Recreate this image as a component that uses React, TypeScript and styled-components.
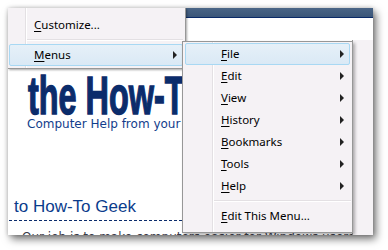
import styled, { createGlobalStyle } from 'styled-components';

const GlobalStyle = createGlobalStyle`
  html, body {
    margin: 0;
    padding: 0;
    background: #ffffff;
  }
  body {
    width: 388px;
    height: 250px;
    overflow: hidden;
    font-family: "Noto Sans", "DejaVu Sans", sans-serif;
  }
`;

const topItems = [
  { key: 'F', rest: 'ile', active: true },
  { key: 'E', rest: 'dit' },
  { key: 'V', rest: 'iew' },
  { key: 'H', rest: 'istory' },
  { key: 'B', rest: 'ookmarks' },
  { key: 'T', rest: 'ools' },
  { key: 'H', rest: 'elp' }
];

const App = () => {
  return (
    <>
      <GlobalStyle />
      <S.Window>
        <S.Page>
          <S.TitleBar />
          <S.ToolbarBand />
          <S.Body>
            <S.Main>
              <S.Logo>
                <S.LogoText>the How-To Geek</S.LogoText>
              </S.Logo>
              <S.Tagline>Computer Help from your Friendly How-To Geek</S.Tagline>
              <S.Welcome>to How-To Geek</S.Welcome>
              <S.Intro>Our job is to make computers easier for Windows users</S.Intro>
            </S.Main>
            <S.SideStrip />
          </S.Body>
        </S.Page>

        {/* context menu */}
        <S.ContextMenu>
          <S.Item>
            <S.Label>
              <u>C</u>ustomize...
            </S.Label>
          </S.Item>
          <S.Separator />
          <S.Item active>
            <S.Label>
              <u>M</u>enus
            </S.Label>
            <S.Arrow />
          </S.Item>
        </S.ContextMenu>

        {/* submenu */}
        <S.SubMenu>
          {topItems.map((item, i) => (
            <S.Item key={i} active={item.active} wide>
              <S.Label wide>
                <u>{item.key}</u>
                {item.rest}
              </S.Label>
              <S.Arrow />
            </S.Item>
          ))}
          <S.Separator wide />
          <S.Item wide>
            <S.Label wide>
              <u>E</u>dit This Menu...
            </S.Label>
          </S.Item>
        </S.SubMenu>
      </S.Window>
    </>
  );
};
export default App;

const Window = styled.div`
  position: relative;
  margin: 8px 0 0 8px;
  width: 365px;
  height: 227px;
  overflow: hidden;
  background: #ffffff;
  box-shadow: 3px 4px 8px rgba(0, 0, 0, 0.55), 0 0 4px rgba(0, 0, 0, 0.2);
`;

const Page = styled.div`
  display: flex;
  flex-direction: column;
  height: 100%;
`;

const TitleBar = styled.div`
  flex-shrink: 0;
  height: 9px;
  background: linear-gradient(#4a6586, #3b5679);
  border-bottom: 1px solid #0a2a68;
`;

const ToolbarBand = styled.div`
  flex-shrink: 0;
  height: 22px;
  background: #ffffff;
`;

const Body = styled.div`
  flex: 1;
  min-height: 0;
  display: flex;
  overflow: hidden;
`;

const Main = styled.div`
  flex: 1;
  padding-top: 28px;
  overflow: hidden;
`;

const Logo = styled.div`
  padding-left: 20px;
  height: 49px;
  line-height: 1;
  white-space: nowrap;
`;

const LogoText = styled.span`
  display: inline-block;
  font-family: "Liberation Sans", sans-serif;
  font-weight: 700;
  font-size: 54px;
  line-height: 54px;
  color: #0b2c6b;
  transform: scaleX(0.6);
  transform-origin: left center;
  -webkit-text-stroke: 1.5px #0b2c6b;
`;

const Tagline = styled.div`
  padding-left: 19px;
  font-family: "DejaVu Sans", sans-serif;
  font-size: 12px;
  line-height: 14px;
  color: #123d8c;
  white-space: nowrap;
`;

const Welcome = styled.div`
  margin: 66px 0 0 1px;
  padding: 0 0 3px 5px;
  font-family: "Liberation Sans", sans-serif;
  font-size: 17px;
  line-height: 20px;
  color: #0b3c8c;
  border-bottom: 1px dashed #0b2c6b;
  white-space: nowrap;
`;

const Intro = styled.div`
  padding: 9px 0 0 14px;
  font-family: "DejaVu Sans", sans-serif;
  font-size: 12px;
  line-height: 14px;
  color: #3a3a48;
  white-space: nowrap;
`;

const SideStrip = styled.div`
  width: 20px;
  background: #f5f2f5;
  border-left: 1px solid #979797;
`;

const MenuBase = styled.div`
  position: absolute;
  background: #f5f2f5;
  box-sizing: border-box;
`;

const ContextMenu = styled(MenuBase)`
  left: 0;
  top: 0;
  width: 178px;
  height: 61px;
  padding: 6px 2px 0 1px;
  border-right: 1px solid #979797;
  border-bottom: 1px solid #979797;
  box-shadow: 1px 1px 2px rgba(0, 0, 0, 0.35);
  background-image: linear-gradient(90deg, transparent 17px, #e3e0e3 17px, #e3e0e3 18px, #ffffff 18px, #ffffff 19px, transparent 19px);
`;

const SubMenu = styled(MenuBase)`
  left: 174px;
  top: 33px;
  width: 171px;
  height: 192px;
  padding: 1px 1px 0 1px;
  border: 1px solid #979797;
  box-shadow: 2px 2px 3px rgba(0, 0, 0, 0.3);
  background-image: linear-gradient(90deg, transparent 29px, #e3e0e3 29px, #e3e0e3 30px, #ffffff 30px, #ffffff 31px, transparent 31px);
`;

const Item = styled.div<{ active?: boolean; wide?: boolean }>`
  position: relative;
  display: flex;
  align-items: center;
  height: 22px;
  box-sizing: border-box;
  margin: 0 ${({ wide }) => (wide ? '1px' : '0')};
  border: 1px solid ${({ active }) => (active ? '#a8d8f3' : 'transparent')};
  border-radius: 2px;
  background: ${({ active }) =>
    active ? 'linear-gradient(#e6f0f8, #dae9f5)' : 'transparent'};
`;

const Label = styled.span<{ wide?: boolean }>`
  flex: 1;
  padding-left: ${({ wide }) => (wide ? '35px' : '24px')};
  font-size: 11.5px;
  line-height: 16px;
  color: #000;
  white-space: nowrap;
  u {
    text-decoration: underline;
    text-underline-offset: 2px;
  }
`;

const Arrow = styled.span`
  width: 0;
  height: 0;
  margin-right: 5px;
  border-top: 4px solid transparent;
  border-bottom: 4px solid transparent;
  border-left: 4px solid #222;
`;

const Separator = styled.div<{ wide?: boolean }>`
  margin: 3px 0 3px ${({ wide }) => (wide ? '30px' : '18px')};
  height: 1px;
  background: #e3e0e3;
  border-bottom: 1px solid #ffffff;
`;

const S = {
  Window,
  Page,
  TitleBar,
  ToolbarBand,
  Body,
  Main,
  Logo,
  LogoText,
  Tagline,
  Welcome,
  Intro,
  SideStrip,
  ContextMenu,
  SubMenu,
  Item,
  Label,
  Arrow,
  Separator
};
